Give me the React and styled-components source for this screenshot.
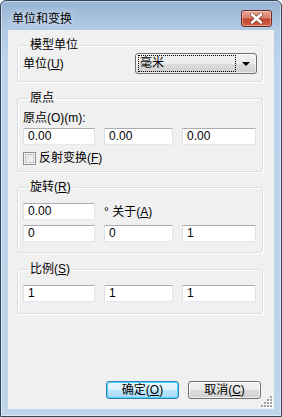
import React from 'react'
import styled, { createGlobalStyle } from 'styled-components'

const Global = createGlobalStyle`
  html, body { margin: 0; padding: 0; background: #fff; }
  body {
    font-family: "Liberation Sans", "Noto Sans CJK SC", sans-serif;
    font-size: 12px;
    line-height: 16px;
    color: #000;
  }
`

const Window = styled.div`
  box-sizing: border-box;
  width: 282px;
  height: 417px;
  border: 1px solid #34465c;
  border-radius: 6px 6px 0 0;
  background: linear-gradient(to bottom, #98b4d4 0px, #b2cae4 28px, #bcd3eb 60px, #bed5ec 100%);
  padding: 0 7px 7px 7px;
  display: flex;
  flex-direction: column;
  box-shadow: inset 0 0 0 1px rgba(255, 255, 255, 0.45);
`

const TitleBar = styled.div`
  height: 29px;
  display: flex;
  justify-content: space-between;
  align-items: flex-start;
  flex-shrink: 0;
`

const Title = styled.div`
  margin-top: 10px;
  margin-left: 4px;
  font-size: 12px;
  text-shadow: 0 0 6px rgba(255, 255, 255, 0.9);
`

const CloseButton = styled.div`
  box-sizing: border-box;
  margin-top: 9px;
  margin-right: 2px;
  width: 31px;
  height: 17px;
  border: 1px solid #6e2a20;
  border-radius: 3px;
  background: linear-gradient(to bottom, #e9a99a 0%, #d47e69 45%, #c2442b 55%, #d0654a 100%);
  box-shadow: inset 0 0 0 1px rgba(255, 255, 255, 0.35);
  display: flex;
  align-items: center;
  justify-content: center;
`

const Client = styled.div`
  flex: 1;
  background: #f0f0f0;
  display: flex;
  flex-direction: column;
  position: relative;
`

const Group = styled.fieldset`
  margin: ${p => p.$top}px 11px 0 9px;
  padding: ${p => p.$pt}px 5px ${p => p.$pb}px 5px;
  border: 1px solid #d5dfe5;
  border-radius: 3px;
  box-shadow: inset 1px 1px 0 #fff, 1px 1px 0 #fff;
  min-inline-size: 0;
`

const Legend = styled.legend`
  margin-left: 5px;
  padding: 0 2px;
  line-height: 16px;
`

const Row = styled.div`
  display: flex;
  align-items: center;
  justify-content: space-between;
  margin-top: ${p => p.$top || 0}px;
`

const Label = styled.div`
  line-height: 16px;
  margin-top: ${p => p.$top || 0}px;
`

const Fields = styled.div`
  display: grid;
  grid-template-columns: 72px 69px 74px;
  column-gap: 9px;
  align-items: center;
  margin-top: ${p => p.$top || 0}px;
`

const Input = styled.div`
  box-sizing: border-box;
  height: 17px;
  background: #fff;
  border: 1px solid;
  border-color: #abadb3 #e2e3ea #e3e9ef #dbdfe6;
  padding: 0 4px;
  line-height: 15px;
  font-size: 12px;
  white-space: nowrap;
`

const Combo = styled.div`
  box-sizing: border-box;
  width: 122px;
  height: 21px;
  border: 1px solid #707070;
  border-radius: 3px;
  background: linear-gradient(to bottom, #f2f2f2 0%, #ebebeb 50%, #dddddd 51%, #cfcfcf 100%);
  box-shadow: inset 0 0 0 1px rgba(255, 255, 255, 0.6);
  display: flex;
  align-items: center;
  padding: 0 6px 0 2px;
  gap: 6px;
`

const ComboText = styled.div`
  flex: 1;
  height: 15px;
  line-height: 15px;
  border: 1px dotted #000;
  padding-left: 1px;
`

const Arrow = styled.div`
  width: 0;
  height: 0;
  border-left: 4px solid transparent;
  border-right: 4px solid transparent;
  border-top: 4px solid #000;
`

const CheckRow = styled.div`
  display: flex;
  align-items: center;
  gap: 3px;
  margin-top: ${p => p.$top || 0}px;
  line-height: 16px;
`

const CheckBox = styled.span`
  box-sizing: border-box;
  width: 13px;
  height: 13px;
  border: 1px solid #8f8f8f;
  background: linear-gradient(135deg, #dcdcdc 0%, #f4f4f4 70%, #fff 100%);
  box-shadow: inset 0 0 0 1px #f4f4f4, inset 0 0 0 2px #c9c9c9;
`

const Spacer = styled.div`
  flex: 1;
`

const Buttons = styled.div`
  display: flex;
  justify-content: flex-end;
  gap: 9px;
  margin: 0 13px 10px 0;
`

const Button = styled.div`
  box-sizing: border-box;
  width: 73px;
  height: 18px;
  border: 1px solid ${p => (p.$default ? '#3c7fb1' : '#707070')};
  border-radius: 3px;
  background: ${p =>
    p.$default
      ? 'linear-gradient(to bottom, #eaf6fd 0%, #d9f0fc 50%, #bee6fd 51%, #a7d9f5 100%)'
      : 'linear-gradient(to bottom, #f2f2f2 0%, #ebebeb 50%, #dddddd 51%, #cfcfcf 100%)'};
  box-shadow: ${p =>
    p.$default ? 'inset 0 0 0 1px #48d6fb' : 'inset 0 0 0 1px rgba(255,255,255,0.7)'};
  display: flex;
  align-items: center;
  justify-content: center;
  line-height: 16px;
`

const Grip = styled.svg`
  position: absolute;
  right: 1px;
  bottom: 1px;
`

const CloseIcon = () => (
  <svg width="13" height="11" viewBox="0 0 13 11">
    <path d="M2 1.5 L11 9.5 M11 1.5 L2 9.5" stroke="#5a1d15" strokeWidth="4.2" strokeLinecap="round" opacity="0.55" />
    <path d="M2 1.5 L11 9.5 M11 1.5 L2 9.5" stroke="#fff" strokeWidth="2.6" strokeLinecap="round" />
  </svg>
)

const GripIcon = () => {
  const dots = []
  for (let r = 0; r < 4; r++) {
    for (let c = 0; c <= r; c++) {
      dots.push([10 - c * 3, 10 - (r - c) * 3])
    }
  }
  return (
    <Grip width="12" height="12" viewBox="0 0 12 12">
      {dots.map(([x, y], i) => (
        <g key={i}>
          <rect x={x} y={y} width="2" height="2" fill="#fff" />
          <rect x={x - 1} y={y - 1} width="2" height="2" fill="#a0a0a0" />
        </g>
      ))}
    </Grip>
  )
}

export default function App() {
  return (
    <>
      <Global />
      <Window>
        <TitleBar>
          <Title>单位和变换</Title>
          <CloseButton>
            <CloseIcon />
          </CloseButton>
        </TitleBar>
        <Client>
          <Group $top={7} $pt={0} $pb={7}>
            <Legend>模型单位</Legend>
            <Row>
              <Label>单位(<u>U</u>)</Label>
              <Combo>
                <ComboText>毫米</ComboText>
                <Arrow />
              </Combo>
            </Row>
          </Group>

          <Group $top={8} $pt={4} $pb={5}>
            <Legend>原点</Legend>
            <Label>原点(O)(m):</Label>
            <Fields $top={2}>
              <Input>0.00</Input>
              <Input>0.00</Input>
              <Input>0.00</Input>
            </Fields>
            <CheckRow $top={5}>
              <CheckBox />
              <span>反射变换(<u>F</u>)</span>
            </CheckRow>
          </Group>

          <Group $top={7} $pt={8} $pb={10}>
            <Legend>旋转(<u>R</u>)</Legend>
            <Fields>
              <Input>0.00</Input>
              <Label>° 关于(<u>A</u>)</Label>
            </Fields>
            <Fields $top={5}>
              <Input>0</Input>
              <Input>0</Input>
              <Input>1</Input>
            </Fields>
          </Group>

          <Group $top={8} $pt={8} $pb={11}>
            <Legend>比例(<u>S</u>)</Legend>
            <Fields>
              <Input>1</Input>
              <Input>1</Input>
              <Input>1</Input>
            </Fields>
          </Group>

          <Spacer />
          <Buttons>
            <Button $default>确定(<u>O</u>)</Button>
            <Button>取消(<u>C</u>)</Button>
          </Buttons>
          <GripIcon />
        </Client>
      </Window>
    </>
  )
}
